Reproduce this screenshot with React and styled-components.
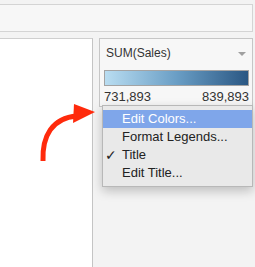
import React from "react";
import styled, { createGlobalStyle } from "styled-components";

const menuItems = [
  { label: "Edit Colors...", active: true },
  { label: "Format Legends..." },
  { label: "Title", checked: true },
  { label: "Edit Title..." },
];

const App = () => {
  return (
    <Page>
      <GlobalStyle />
      <TopBar />
      <Content>
        <Sheet />
        <Side>
          <Legend>
            <LegendHeader>
              <LegendTitle>SUM(Sales)</LegendTitle>
              <Caret />
            </LegendHeader>
            <ColorRamp />
            <RangeRow>
              <span>731,893</span>
              <span>839,893</span>
            </RangeRow>
          </Legend>
          <Menu>
            {menuItems.map((item, index) => (
              <MenuItem key={index} $active={item.active}>
                {item.checked && <Check>✓</Check>}
                {item.label}
              </MenuItem>
            ))}
          </Menu>
        </Side>
      </Content>
      <Arrow width="100" height="170" viewBox="0 0 100 170">
        <path
          d="M43 161 C42 136 52 118 77 116"
          fill="none"
          stroke="#ff2a0c"
          strokeWidth="5"
        />
        <polygon points="74,104 95,112 73,123" fill="#ff2a0c" />
      </Arrow>
    </Page>
  );
};

export default App;

const GlobalStyle = createGlobalStyle`
  body {
    margin: 0;
    background: #f3f3f3;
    font-family: "Liberation Sans", Arial, sans-serif;
  }
`;

const Page = styled.div`
  position: relative;
  width: 255px;
  height: 267px;
  padding-top: 4px;
  box-sizing: border-box;
  overflow: hidden;
  background: #f3f3f3;
`;

const TopBar = styled.div`
  height: 26px;
  margin-right: 2px;
  margin-left: -1px;
  background: #f7f7f7;
  border: 1px solid #d4d4d4;
`;

const Content = styled.div`
  display: flex;
  margin-top: 6px;
  height: 229px;
`;

const Sheet = styled.div`
  width: 92px;
  background: #ffffff;
  border-top: 1px solid #cfcfcf;
  border-right: 1px solid #c4c4c4;
  box-sizing: border-box;
  width: 93px;
`;

const Side = styled.div`
  position: relative;
  flex: 1;
  padding: 0 2px 0 6px;
`;

const Legend = styled.div`
  height: 67px;
  background: #f7f7f7;
  border: 1px solid #c6c6c6;
  display: flex;
  flex-direction: column;
`;

const LegendHeader = styled.div`
  height: 32px;
  display: flex;
  align-items: center;
  justify-content: space-between;
  padding: 0 6px 0 6px;
  margin-top: -2px;
`;

const LegendTitle = styled.span`
  font-size: 12px;
  color: #333;
`;

const Caret = styled.span`
  width: 0;
  height: 0;
  border-left: 4px solid transparent;
  border-right: 4px solid transparent;
  border-top: 4px solid #a0a0a0;
  margin-top: 1px;
`;

const ColorRamp = styled.div`
  height: 14px;
  margin: 1px 3px 0 4px;
  border: 1px solid #a3a3a3;
  background: linear-gradient(to right, #b9ddf1, #6a9ec5 50%, #2a5783);
`;

const RangeRow = styled.div`
  display: flex;
  justify-content: space-between;
  margin: 3px 3px 0 4px;
  font-size: 13px;
  line-height: 15px;
  color: #333;
`;

const Menu = styled.div`
  position: absolute;
  top: 67px;
  left: 9px;
  width: 149px;
  padding: 4px 0;
  background: #e9e9e9;
  border: 1px solid #b8b8b8;
  box-shadow: 0 4px 10px rgba(0, 0, 0, 0.22);
`;

const MenuItem = styled.div`
  position: relative;
  height: 18px;
  line-height: 18px;
  padding-left: 19px;
  font-size: 13px;
  color: ${(p) => (p.$active ? "#ffffff" : "#222222")};
  background: ${(p) => (p.$active ? "#7fa6ea" : "transparent")};
`;

const Check = styled.span`
  position: absolute;
  left: 2px;
  top: 0;
  font-family: "DejaVu Sans", sans-serif;
  font-size: 14px;
`;

const Arrow = styled.svg`
  position: absolute;
  left: 0;
  top: 0;
`;
